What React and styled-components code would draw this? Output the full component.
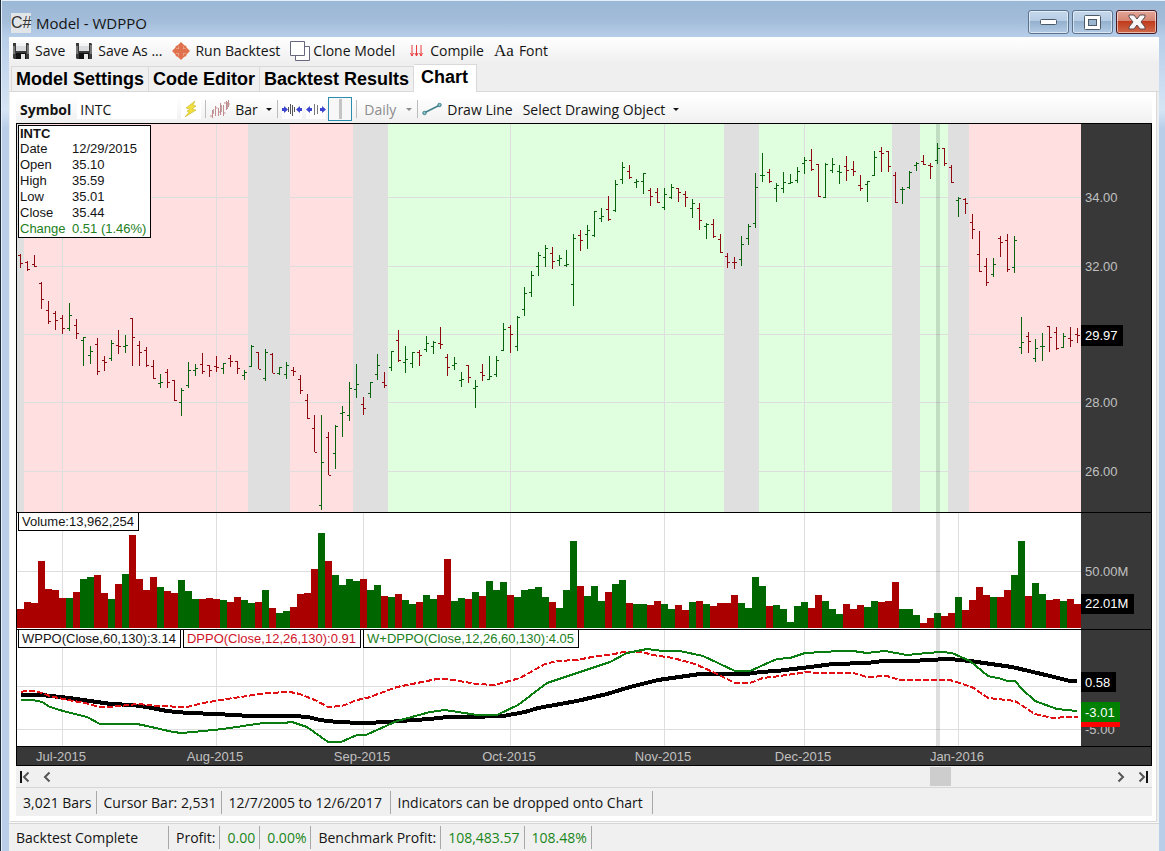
import React from "react";
import styled, { createGlobalStyle, css } from "styled-components";

const GlobalStyle = createGlobalStyle`
  *, *::before, *::after {
    box-sizing: border-box;
  }
  body {
    margin: 0;
    background: #b8cfe8;
    font-family: "Open Sans", "Noto Sans", sans-serif;
    font-size: 14px;
    color: #141414;
  }
  button, input, select {
    font: inherit;
    color: inherit;
  }
`;

// open, high, low, close, volume (all y positions), 1 = up day
const BARS = [
  [255, 254, 268, 263, 609, 0], [262, 261, 271, 269, 602, 0], [264, 255, 267, 266, 603, 0],
  [283, 282, 309, 299, 561, 0], [310, 301, 324, 321, 589, 0], [313, 311, 330, 320, 590, 0],
  [318, 315, 334, 328, 598, 0], [328, 303, 331, 315, 598, 1], [325, 319, 339, 333, 592, 0],
  [340, 337, 366, 337, 579, 1], [355, 346, 364, 351, 577, 1], [344, 338, 375, 371, 575, 0],
  [360, 356, 371, 362, 593, 0], [358, 340, 361, 343, 599, 1], [345, 330, 354, 346, 584, 0],
  [346, 335, 353, 345, 574, 1], [318, 318, 366, 337, 535, 0], [345, 341, 366, 352, 579, 0],
  [350, 347, 367, 365, 590, 0], [366, 360, 379, 378, 577, 0], [383, 374, 388, 382, 587, 1],
  [372, 369, 388, 382, 591, 0], [380, 380, 401, 400, 593, 0], [402, 388, 416, 390, 580, 1],
  [385, 362, 388, 370, 591, 1], [370, 364, 376, 368, 599, 1], [364, 353, 374, 371, 599, 0],
  [365, 365, 377, 370, 598, 0], [366, 356, 372, 367, 599, 0], [368, 363, 374, 363, 600, 1],
  [358, 355, 367, 361, 602, 0], [361, 361, 374, 368, 597, 0], [375, 370, 380, 372, 600, 1],
  [366, 345, 367, 346, 603, 1], [352, 352, 369, 369, 602, 0], [378, 349, 381, 352, 590, 1],
  [354, 353, 373, 373, 608, 0], [373, 367, 375, 367, 613, 1], [374, 362, 379, 365, 611, 1],
  [370, 367, 376, 371, 607, 0], [379, 375, 394, 390, 594, 0], [400, 394, 419, 418, 593, 0],
  [428, 415, 452, 452, 569, 0], [505, 415, 510, 462, 533, 1], [437, 432, 475, 475, 561, 0],
  [453, 425, 469, 426, 575, 1], [413, 406, 437, 412, 585, 1], [415, 382, 421, 388, 579, 1],
  [389, 364, 398, 384, 581, 1], [404, 397, 415, 408, 579, 0], [393, 382, 398, 382, 590, 1],
  [374, 354, 380, 365, 585, 1], [382, 372, 388, 385, 596, 0], [367, 351, 371, 351, 597, 1],
  [340, 330, 362, 360, 594, 0], [362, 346, 373, 359, 600, 1], [363, 352, 368, 352, 604, 1],
  [352, 350, 366, 355, 602, 0], [349, 336, 352, 343, 595, 1], [346, 341, 354, 342, 599, 1],
  [343, 327, 349, 344, 595, 0], [357, 354, 376, 367, 559, 0], [365, 357, 370, 363, 601, 1],
  [380, 372, 387, 379, 598, 1], [365, 365, 383, 377, 599, 0], [388, 380, 408, 386, 592, 1],
  [372, 364, 381, 375, 596, 0], [379, 356, 380, 376, 581, 1], [374, 356, 377, 360, 590, 1],
  [350, 323, 351, 329, 582, 1], [327, 325, 353, 334, 595, 0], [346, 316, 351, 317, 597, 1],
  [309, 287, 316, 293, 590, 1], [292, 271, 297, 275, 589, 1], [266, 252, 276, 255, 587, 1],
  [257, 245, 267, 248, 597, 1], [253, 247, 269, 261, 602, 0], [260, 255, 266, 258, 608, 1],
  [265, 250, 267, 264, 590, 1], [284, 234, 306, 238, 541, 1], [235, 230, 251, 240, 586, 0],
  [234, 225, 249, 230, 596, 1], [235, 211, 237, 211, 586, 1], [218, 208, 222, 216, 601, 1],
  [209, 196, 221, 219, 592, 0], [210, 180, 212, 184, 584, 1], [179, 162, 184, 167, 580, 1],
  [171, 165, 179, 177, 603, 0], [182, 179, 188, 181, 604, 1], [181, 173, 194, 173, 604, 1],
  [190, 188, 206, 196, 605, 0], [192, 188, 203, 202, 601, 0], [207, 188, 210, 194, 604, 1],
  [197, 184, 199, 187, 609, 1], [188, 188, 202, 192, 605, 0], [194, 191, 207, 197, 610, 0],
  [208, 199, 218, 203, 602, 1], [208, 203, 230, 220, 601, 0], [226, 223, 239, 224, 604, 1],
  [224, 219, 238, 236, 606, 0], [239, 234, 253, 252, 603, 0], [256, 253, 268, 262, 603, 0],
  [262, 257, 269, 262, 595, 0], [259, 236, 266, 244, 603, 1], [238, 224, 245, 226, 608, 1],
  [223, 173, 228, 187, 577, 1], [175, 153, 182, 175, 586, 1], [172, 169, 183, 181, 606, 0],
  [188, 183, 202, 185, 605, 1], [188, 172, 193, 182, 609, 1], [183, 174, 184, 182, 622, 1],
  [180, 167, 183, 171, 606, 1], [163, 157, 174, 160, 602, 1], [160, 149, 171, 169, 608, 0],
  [164, 164, 197, 196, 595, 0], [197, 163, 198, 164, 601, 1], [170, 158, 173, 164, 609, 1],
  [171, 165, 184, 172, 614, 1], [166, 156, 181, 170, 604, 0], [169, 161, 176, 171, 609, 0],
  [185, 175, 191, 188, 605, 0], [184, 181, 202, 181, 607, 1], [175, 151, 176, 157, 601, 1],
  [151, 147, 172, 153, 602, 0], [151, 151, 172, 166, 601, 0], [175, 172, 203, 202, 582, 0],
  [189, 187, 204, 189, 609, 1], [187, 171, 189, 172, 609, 1], [165, 162, 171, 163, 615, 1],
  [161, 155, 165, 164, 623, 0], [165, 163, 179, 166, 618, 0], [160, 143, 164, 148, 613, 1],
  [148, 148, 166, 163, 616, 0], [167, 165, 183, 182, 613, 0], [200, 197, 217, 198, 597, 1],
  [199, 198, 214, 203, 610, 0], [222, 214, 239, 229, 600, 0], [254, 231, 272, 271, 587, 0],
  [266, 258, 286, 282, 595, 0], [274, 258, 277, 264, 597, 1], [238, 236, 257, 242, 597, 0],
  [240, 234, 272, 269, 590, 0], [267, 236, 273, 240, 575, 1], [347, 317, 354, 342, 541, 1],
  [336, 332, 353, 341, 596, 0], [358, 339, 362, 348, 583, 1], [346, 333, 361, 346, 594, 1],
  [326, 326, 352, 337, 600, 0], [332, 327, 350, 348, 599, 0], [347, 333, 348, 336, 601, 1],
  [338, 327, 347, 340, 599, 0], [334, 328, 343, 335, 604, 0],
];

const STEP = 7;
const PRICE_TOP = 124;
const VOLUME_TOP = 513;

const NEUTRAL = "#dfdfdf";
const BEAR = "#ffdfdf";
const BULL = "#dfffdf";

// trend zones behind the price: first bar, last bar, colour
const ZONES = [
  [0, 1, NEUTRAL], [1, 33, BEAR], [33, 39, NEUTRAL], [39, 48, BEAR],
  [48, 53, NEUTRAL], [53, 101, BULL], [101, 106, NEUTRAL], [106, 125, BULL],
  [125, 129, NEUTRAL], [129, 133, BULL], [133, 136, NEUTRAL], [136, 152, BEAR],
];

const MONTHS = [
  [45, "Jul-2015"], [199, "Aug-2015"], [346, "Sep-2015"], [493, "Oct-2015"],
  [647, "Nov-2015"], [787, "Dec-2015"], [941, "Jan-2016"],
];

const PRICES = [[73, "34.00"], [142, "32.00"], [210, "30.00"], [278, "28.00"], [347, "26.00"]];

const WPPO =
  "4,65 25,65 52,68 73,71 94,74 115,75 130,77 150,81 171,83 200,84 233,86 276,86 291,87 303,90 320,92 346,93 372,92 383,91 413,89 430,87 451,87 486,86 508,82 521,78 560,71 590,64 613,57 641,50 683,44 730,44 743,42 760,41 793,37 816,34 850,33 866,31 896,31 910,30 933,29 953,31 995,37 1033,46 1053,51 1060,51";
const DPPO =
  "4,62 8,61 18,61 25,63 33,66 46,69 73,74 81,77 93,77 121,74 140,76 170,77 186,73 210,69 250,63 273,62 283,64 300,71 311,77 325,76 340,70 350,68 380,57 420,49 430,49 460,54 478,55 503,48 528,34 540,31 560,30 580,26 593,25 606,22 625,22 636,25 656,28 678,34 696,42 718,53 733,53 746,48 763,46 791,42 801,43 836,43 850,47 870,46 883,50 933,50 955,57 971,68 998,71 1018,84 1036,88 1050,87 1061,87";
const SUM =
  "4,70 16,70 25,72 33,77 46,81 70,87 83,94 120,94 130,96 156,102 165,103 176,102 206,99 246,93 266,93 275,92 290,97 311,112 324,112 340,105 349,105 360,100 380,91 413,82 428,80 460,85 480,85 501,75 530,53 563,42 593,32 610,23 630,19 646,21 663,21 686,26 718,41 733,41 753,32 760,29 773,28 788,23 823,21 836,21 850,23 868,21 890,25 910,23 925,22 935,23 953,31 971,46 985,49 990,51 998,51 1005,59 1018,71 1040,79 1060,81";

const Window = styled.div`
  min-height: 100vh;
  padding: 0 6px 0 8px;
  border-left: 1px solid #1d2b3a;
  background: linear-gradient(#9ab8d6 0, #a2bcd9 20px, #b7cee9 37px, #d6e5f5 110px, #b9cfe9 128px);
  box-shadow: inset 1px 1px 0 #e6f0fa;
`;

const TitleBar = styled.header`
  display: flex;
  align-items: center;
  height: 37px;
  padding: 8px 2px 0;
`;

const AppBadge = styled.span`
  width: 20px;
  height: 20px;
  margin: 0 5px 0 0;
  background: #e2e5e8;
  color: #333;
  font: 16px/20px "Liberation Sans", Arial, sans-serif;
  text-align: center;
`;

const Title = styled.h1`
  flex: 1;
  margin: 0;
  font-size: 15px;
  font-weight: 400;
`;

const Captions = styled.div`
  display: flex;
  align-self: flex-start;
  gap: 3px;
  padding-top: 2px;
`;

const CaptionButton = styled.button`
  display: grid;
  place-items: center;
  width: 41px;
  height: 24px;
  padding: 0;
  border: 1px solid ${(p) => (p.$danger ? "#4a1820" : "#5a738f")};
  border-radius: 3px;
  box-shadow: inset 0 0 0 1px rgba(255, 255, 255, 0.55);
  background: ${(p) =>
    p.$danger
      ? "linear-gradient(#e2a698 0, #d58572 46%, #c03a1c 47%, #cf6a4a 100%)"
      : "linear-gradient(#c5d8ec 0, #b6cce4 46%, #93b0cd 47%, #b3cbe5 100%)"};
`;

const Body = styled.main`
  background: #efefef;
`;

const Toolbar = styled.div`
  display: flex;
  align-items: center;
  height: ${(p) => (p.$inner ? "26px" : "25px")};
  padding: ${(p) => (p.$inner ? "0 3px 2px" : "2px 3px 0")};
  background: linear-gradient(#fff, #f0f0f0);
  white-space: nowrap;
`;

const ToolButton = styled.button`
  display: flex;
  align-items: center;
  gap: ${(p) => p.$gap || 5}px;
  margin: 0 10px 0 0;
  padding: 0;
  border: 0;
  background: none;
  svg {
    flex: none;
  }
`;

const FontGlyph = styled.span`
  width: 20px;
  font: 17px/20px "Liberation Serif", serif;
  text-align: center;
`;

const TabStrip = styled.nav`
  display: flex;
  align-items: flex-end;
  height: 30px;
  padding-left: 2px;
  border-bottom: 1px solid #d9d9d9;
`;

const Tab = styled.button`
  height: 25px;
  padding: 0 4px;
  border: 1px solid #d9d9d9;
  border-width: 1px 1px 0 0;
  background: #f0f0f0;
  color: #000;
  font: bold 18px/24px "Liberation Sans", Arial, sans-serif;
  white-space: nowrap;
  &:first-child {
    border-left-width: 1px;
  }
  ${(p) =>
    p.$active &&
    css`
      height: 28px;
      margin-bottom: -1px;
      padding: 0 8px 4px 7px;
      background: #fff;
    `}
`;

const TabPage = styled.section`
  margin: 0 2px 0 1px;
  padding: 5px 4px 5px 6px;
  border-right: 1px solid #d9d9d9;
  border-bottom: 1px solid #d9d9d9;
  background: #fff;
`;

const SymbolLabel = styled.label`
  font-weight: 700;
  margin: 0 6px 0 1px;
`;

const SymbolInput = styled.input`
  width: 100px;
  height: 20px;
  margin-right: 4px;
  padding: 0 3px;
  border: 0;
  background: #fff;
`;

const Separator = styled.span`
  width: 1px;
  height: 18px;
  margin: 0 4px;
  background: #bdbdbd;
`;

const IconButton = styled.button`
  display: grid;
  place-items: center;
  width: 20px;
  height: 20px;
  margin-right: ${(p) => p.$space || 0}px;
  padding: 0;
  border: 0;
  background: #fff;
`;

const ToggleButton = styled(IconButton)`
  width: 24px;
  height: 24px;
  margin-left: 2px;
  border: 1px solid #2a8cae;
  background: #f7f7f7;
`;

const Picker = styled.label`
  display: flex;
  align-items: center;
  gap: 5px;
  padding-left: ${(p) => (p.$muted ? "3px" : 0)};
  color: ${(p) => (p.$muted ? "#8c8c8c" : "inherit")};
`;

const PickerSelect = styled.select`
  width: ${(p) => p.$width}px;
  padding: 0;
  border: 0;
  appearance: none;
  background: none;
`;

const Caret = styled.span`
  width: 0;
  margin-right: 1px;
  border: 3px solid transparent;
  border-top-color: currentColor;
  border-bottom: 0;
`;

const Chart = styled.div`
  border: 1px solid #000;
  background: #383838;
  font: 13px/16px "Liberation Sans", Arial, sans-serif;
`;

const Pane = styled.div`
  position: relative;
  display: flex;
  height: ${(p) => p.$height}px;
  border-bottom: 1px solid #000;
`;

const Plot = styled.svg`
  flex: 1;
  min-width: 0;
  height: 100%;
  background: #fff;
  shape-rendering: crispEdges;
`;

const Scale = styled.svg`
  flex: none;
  width: 70px;
  height: 100%;
  fill: #c0c0c0;
`;

const TimeAxis = styled.svg`
  display: block;
  width: 100%;
  height: 18px;
  fill: #c0c0c0;
`;

const Quote = styled.table`
  position: absolute;
  top: 1px;
  left: 1px;
  width: 133px;
  border: 1px solid #000;
  border-collapse: separate;
  border-spacing: 0;
  background: #fff;
  th,
  td {
    height: 16px;
    padding: 0 0 0 1px;
    font-weight: 400;
    text-align: left;
    white-space: nowrap;
  }
  th {
    width: 52px;
  }
  tr:first-child th {
    height: 15px;
    line-height: 15px;
    font-weight: 700;
  }
  tr:last-child {
    color: #228022;
  }
`;

const Legends = styled.div`
  position: absolute;
  top: -1px;
  left: 1px;
  display: flex;
  gap: 2px;
`;

const Legend = styled.span`
  height: 19px;
  padding: 0 4px 0 3px;
  border: 1px solid #000;
  background: #fff;
  color: ${(p) => p.$color || "#141414"};
  line-height: 17px;
`;

const ScrollRow = styled.div`
  display: flex;
  align-items: center;
  height: 22px;
  border-bottom: 1px solid #d6d6d6;
  background: #f0f0f0;
`;

const ScrollButton = styled.button`
  display: grid;
  place-items: center;
  width: 24px;
  height: 20px;
  padding: 0;
  border: 0;
  background: none;
  &:first-child,
  &:last-child {
    width: 18px;
  }
`;

const Scroller = styled.input`
  flex: 1;
  height: 20px;
  margin: 0 0 0 16px;
  appearance: none;
  background: none;
  &::-webkit-slider-thumb {
    appearance: none;
    width: 21px;
    height: 19px;
    background: #cdcdcd;
  }
`;

const StatusBar = styled.footer`
  display: flex;
  align-items: center;
  height: ${(p) => p.$height}px;
  background: #f0f0f0;
  white-space: nowrap;
`;

const StatusCell = styled.span`
  min-width: ${(p) => p.$min || 0}px;
  height: 23px;
  padding: 0 4px 0 7px;
  border-right: 1px solid #a8a8a8;
  color: ${(p) => (p.$gain ? "#1a861a" : "inherit")};
  line-height: 23px;
`;

const BottomRule = styled.div`
  height: 2px;
  border-bottom: 1px solid #d6d6d6;
  background: #fafafa;
`;

const SaveIcon = () => (
  <svg width="18" height="18" viewBox="0 0 18 18">
    <path d="M1 1h15l1 1v15H2l-1-1z" fill="#3a3a3a" />
    <path d="M4 1h10v8H4z" fill="#d9dde0" />
    <path d="M4 1h10v3H4z" fill="#f4f5f6" />
    <path d="M4 11h10v6H4z" fill="#111" />
    <path d="M9 12h4v5H9z" fill="#e8e8e8" />
    <path d="M1 4h2v8H1zM15 3h2v9h-2z" fill="#777" />
  </svg>
);

const RunIcon = () => (
  <svg width="18" height="18" viewBox="0 0 18 18" fill="#e0714c">
    <path d="M9 0l4 4h-2v3h3V5l4 4-4 4v-2h-3v3h2l-4 4-4-4h2v-3H4v2L0 9l4-4v2h3V4H5z" />
    <path d="M4 4h10v10H4z" fillOpacity=".55" />
    <circle cx="5" cy="5" r="1.500" />
    <circle cx="13" cy="5" r="1.500" />
    <circle cx="5" cy="13" r="1.500" />
    <circle cx="13" cy="13" r="1.500" />
  </svg>
);

const CloneIcon = () => (
  <svg width="20" height="20" viewBox="0 0 20 20" fill="#fff" stroke="#66667e">
    <path d="M5.500 5.500h14v14h-14z" />
    <path d="M.5.5h14v14H.5z" />
  </svg>
);

const CompileIcon = () => (
  <svg width="20" height="12" viewBox="-5 0 20 12" fill="none" stroke="#ec3a3a">
    <path d="M2 0v11M6.500 0v11M11 0v11M.5 8L2 11l1.500-3M5 8l1.500 3L8 8M9.500 8l1.500 3 1.500-3" />
  </svg>
);

const BoltIcon = () => (
  <svg width="12" height="16" viewBox="0 0 12 16">
    <path d="M10 0L1 7l4 1-3 2 2 1-4 5 11-7-4-1 4-3-3-1z" fill="#f0df3c" stroke="#c9b52c" strokeWidth=".6" />
  </svg>
);

const BarsIcon = () => (
  <svg width="20" height="19" viewBox="0 0 20 19" fill="none" stroke="#c58c90">
    <path d="M2.500 10v8M0 16h2M5.500 6v10M5.500 8h2M8.500 8v8M10.500 3v12M8 12h2M13.500 5v11M13.500 13h2M16.500 1v9M14 3h2M18.500 0v7M18 4h2" />
    <path d="M3.500 9v5M11.500 5v7M17.500 2v7" stroke="#b9a4a6" />
  </svg>
);

const SqueezeIcon = () => (
  <svg width="20" height="13" viewBox="0 0 20 13" fill="#3c46cf">
    <path d="M0 5h2V3l4 3.500L2 10V8H0zM20 5h-2V3l-4 3.500L18 10V8h2z" />
    <path d="M6.500 4v5M8.500 1v10M10.500 2v11M12.500 4v5" stroke="#555" fill="none" />
  </svg>
);

const SpreadIcon = () => (
  <svg width="20" height="13" viewBox="0 0 20 13" fill="#3c46cf">
    <path d="M0 6.500L4 3v2h2v3H4v2zM20 6.500L16 3v2h-2v3h2v2z" />
    <path d="M8.500 1v11M11.500 2v9" stroke="#777" fill="none" />
  </svg>
);

const LineIcon = () => (
  <svg width="20" height="14" viewBox="0 0 20 14" fill="#8fc4c8" stroke="#3e7f8a">
    <path d="M2 11L18 3" strokeWidth="1.500" />
    <circle cx="2.500" cy="11" r="1.700" />
    <circle cx="17.500" cy="3" r="1.700" />
  </svg>
);

const Chevron = ({ flip, stop }) => (
  <svg width="12" height="14" viewBox="0 0 12 14" transform={flip ? "scale(-1 1)" : undefined} fill="none">
    {stop && <path d="M2 1v12" stroke="#111" strokeWidth="2" />}
    <path d="M9.500 2.500L5 7l4.500 4.500" stroke="#555" strokeWidth="2" />
  </svg>
);

function barPath(up) {
  return BARS.map(([o, h, l, c, , dir], i) => {
    if (dir !== up) return "";
    const x = i * STEP + 3;
    const y = (v) => v - PRICE_TOP;
    return `M${x + 0.5} ${y(h)}V${y(l)}M${x - 2} ${y(o) + 0.5}h2M${x + 1} ${y(c) + 0.5}h2`;
  }).join("");
}

function Grid({ rows }) {
  return (
    <g fill="#dedede">
      {MONTHS.map(([x]) => (
        <rect key={x} x={x} width="1" height="100%" />
      ))}
      {rows.map((y) => (
        <rect key={y} y={y} width="100%" height="1" />
      ))}
    </g>
  );
}

const Cursor = () => <rect x="919" width="4" height="100%" fill="#000" opacity=".13" />;

function PricePane() {
  return (
    <Pane $height={389}>
      <Plot>
        {ZONES.map(([from, to, fill]) => (
          <rect key={from} x={from * STEP} width={(to - from) * STEP} height="100%" fill={fill} />
        ))}
        <Grid rows={PRICES.map(([y]) => y)} />
        {ZONES.filter((z) => z[2] === NEUTRAL).map(([from, to, fill]) => (
          <rect key={from} x={from * STEP} width={(to - from) * STEP} height="100%" fill={fill} />
        ))}
        <Cursor />
        <path d={barPath(0)} stroke="#8f0a10" fill="none" />
        <path d={barPath(1)} stroke="#08640c" fill="none" />
      </Plot>
      <Scale>
        {PRICES.filter(([, label]) => label !== "30.00").map(([y, label]) => (
          <text key={label} x="4" y={y + 5}>{label}</text>
        ))}
        <rect y="201" width="42" height="21" fill="#000" />
        <text x="4" y="216" fill="#fff">29.97</text>
      </Scale>
      <Quote>
        <tbody>
          <tr><th colSpan="2">INTC</th></tr>
          <tr><th>Date</th><td>12/29/2015</td></tr>
          <tr><th>Open</th><td>35.10</td></tr>
          <tr><th>High</th><td>35.59</td></tr>
          <tr><th>Low</th><td>35.01</td></tr>
          <tr><th>Close</th><td>35.44</td></tr>
          <tr><th>Change</th><td>0.51 (1.46%)</td></tr>
        </tbody>
      </Quote>
    </Pane>
  );
}

function VolumePane() {
  return (
    <Pane $height={117}>
      <Plot>
        <Grid rows={[58]} />
        {BARS.map((b, i) => (
          <rect
            key={i}
            x={i * STEP}
            y={b[4] - VOLUME_TOP}
            width={STEP}
            height={628 - b[4]}
            fill={b[5] ? "#006600" : "#ab0000"}
          />
        ))}
        <Cursor />
      </Plot>
      <Scale>
        <text x="4" y="63">50.00M</text>
        <rect y="81" width="53" height="20" fill="#000" />
        <text x="4" y="95" fill="#fff">22.01M</text>
      </Scale>
      <Legends>
        <Legend>Volume:13,962,254</Legend>
      </Legends>
    </Pane>
  );
}

function IndicatorPane() {
  return (
    <Pane $height={117}>
      <Plot>
        <Grid rows={[56, 99]} />
        <Cursor />
        <polyline points={WPPO} fill="none" stroke="#000" strokeWidth="4" />
        <polyline points={DPPO} fill="none" stroke="#e00f14" strokeWidth="2" strokeDasharray="6 2" />
        <polyline points={SUM} fill="none" stroke="#0a7d10" strokeWidth="2" />
      </Plot>
      <Scale>
        <text x="4" y="104">-5.00</text>
        <rect y="42" width="35" height="20" fill="#000" />
        <text x="4" y="57" fill="#fff">0.58</text>
        <rect y="76" width="39" height="21" fill="#f00" />
        <rect y="72" width="39" height="20" fill="#008000" />
        <text x="4" y="87" fill="#fff">-3.01</text>
      </Scale>
      <Legends>
        <Legend>WPPO(Close,60,130):3.14</Legend>
        <Legend $color="#d01428">DPPO(Close,12,26,130):0.91</Legend>
        <Legend $color="#228022">W+DPPO(Close,12,26,60,130):4.05</Legend>
      </Legends>
    </Pane>
  );
}

function App() {
  return (
    <Window>
      <GlobalStyle />
      <TitleBar>
        <AppBadge>C#</AppBadge>
        <Title>Model - WDPPO</Title>
        <Captions>
          <CaptionButton aria-label="Minimize">
            <svg width="17" height="7">
              <rect x=".5" y=".5" width="16" height="5" rx="1" fill="#fff" stroke="#4c5a68" />
            </svg>
          </CaptionButton>
          <CaptionButton aria-label="Maximize">
            <svg width="17" height="15" fill="#fff" stroke="#4c5a68">
              <rect x=".5" y=".5" width="16" height="14" rx="1" />
              <rect x="4.500" y="4.500" width="8" height="6" fill="#9db6d0" />
            </svg>
          </CaptionButton>
          <CaptionButton $danger aria-label="Close">
            <svg width="18" height="16">
              <path d="M1 1h5l3 4 3-4h5v2l-4 5 4 5v2h-5l-3-4-3 4H1v-2l4-5-4-5z" fill="#f7f7f7" stroke="#5c4a50" />
            </svg>
          </CaptionButton>
        </Captions>
      </TitleBar>
      <Body>
        <Toolbar>
          <ToolButton><SaveIcon />Save</ToolButton>
          <ToolButton><SaveIcon />Save As ...</ToolButton>
          <ToolButton><RunIcon />Run Backtest</ToolButton>
          <ToolButton $gap={3}><CloneIcon />Clone Model</ToolButton>
          <ToolButton><CompileIcon />Compile</ToolButton>
          <ToolButton><FontGlyph>Aa</FontGlyph>Font</ToolButton>
        </Toolbar>
        <TabStrip>
          <Tab>Model Settings</Tab>
          <Tab>Code Editor</Tab>
          <Tab>Backtest Results</Tab>
          <Tab $active>Chart</Tab>
        </TabStrip>
        <TabPage>
          <Toolbar $inner>
            <SymbolLabel htmlFor="symbol">Symbol</SymbolLabel>
            <SymbolInput id="symbol" defaultValue="INTC" />
            <IconButton aria-label="Go"><BoltIcon /></IconButton>
            <Separator />
            <Picker>
              <BarsIcon />
              <PickerSelect $width={26} aria-label="Chart style">
                <option>Bar</option>
              </PickerSelect>
              <Caret />
            </Picker>
            <Separator />
            <IconButton $space={4} aria-label="Decrease spacing"><SqueezeIcon /></IconButton>
            <IconButton aria-label="Increase spacing"><SpreadIcon /></IconButton>
            <ToggleButton aria-label="Cursor">
              <svg width="3" height="20"><rect width="3" height="20" fill="#c4c4c4" /></svg>
            </ToggleButton>
            <Separator />
            <Picker $muted>
              <PickerSelect $width={37} aria-label="Scale">
                <option>Daily</option>
              </PickerSelect>
              <Caret />
            </Picker>
            <Separator />
            <ToolButton><LineIcon />Draw Line</ToolButton>
            <ToolButton $gap={8}>Select Drawing Object<Caret /></ToolButton>
          </Toolbar>
          <Chart>
            <PricePane />
            <VolumePane />
            <IndicatorPane />
            <TimeAxis textAnchor="middle">
              {MONTHS.map(([x, label]) => (
                <text key={label} x={x - 1} y="14">{label}</text>
              ))}
            </TimeAxis>
          </Chart>
          <ScrollRow>
            <ScrollButton aria-label="First bar"><Chevron stop /></ScrollButton>
            <ScrollButton aria-label="Back"><Chevron /></ScrollButton>
            <Scroller type="range" min="0" max="3000" defaultValue="2531" aria-label="Position" />
            <ScrollButton aria-label="Forward"><Chevron flip /></ScrollButton>
            <ScrollButton aria-label="Last bar"><Chevron flip stop /></ScrollButton>
          </ScrollRow>
          <StatusBar $height={28}>
            <StatusCell>3,021 Bars</StatusCell>
            <StatusCell>Cursor Bar: 2,531</StatusCell>
            <StatusCell $min={169}>12/7/2005 to 12/6/2017</StatusCell>
            <StatusCell $min={262}>Indicators can be dropped onto Chart</StatusCell>
          </StatusBar>
        </TabPage>
        <BottomRule />
        <StatusBar $height={27}>
          <StatusCell $min={160}>Backtest Complete</StatusCell>
          <StatusCell>Profit:</StatusCell>
          <StatusCell $gain>0.00</StatusCell>
          <StatusCell $gain>0.00%</StatusCell>
          <StatusCell>Benchmark Profit:</StatusCell>
          <StatusCell $gain>108,483.57</StatusCell>
          <StatusCell $gain>108.48%</StatusCell>
        </StatusBar>
      </Body>
    </Window>
  );
}

export default App;
